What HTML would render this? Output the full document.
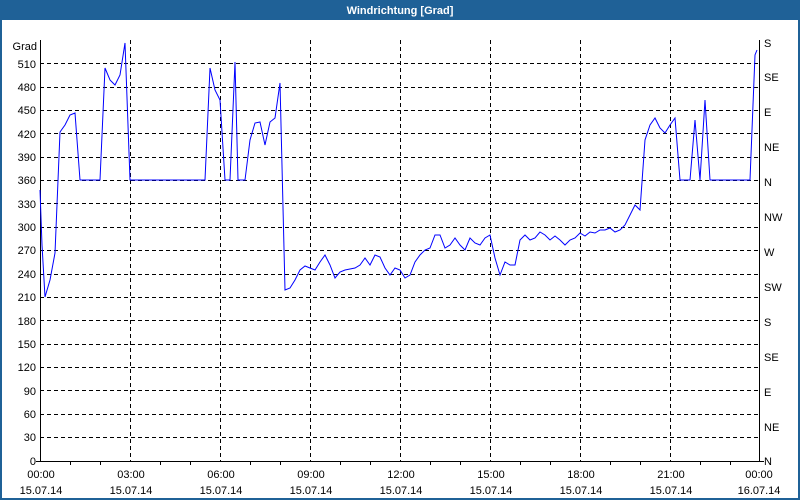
<!DOCTYPE html>
<html><head><meta charset="utf-8"><style>
html,body{margin:0;padding:0;background:#fff;}
body{width:800px;height:500px;overflow:hidden;position:relative;font-family:"Liberation Sans",sans-serif;}
</style></head><body>
<svg width="800" height="500" xmlns="http://www.w3.org/2000/svg" style="position:absolute;left:0;top:0" font-family="Liberation Sans, sans-serif" font-size="11">
<rect x="0" y="0" width="800" height="500" fill="#1f6197"/>
<rect x="2" y="20" width="796" height="478" fill="#fff"/>
<text x="400" y="14" fill="#fff" font-weight="bold" text-anchor="middle">Windrichtung [Grad]</text>
<g stroke="#000" stroke-width="1" stroke-dasharray="4,3" shape-rendering="crispEdges">
<line x1="40" x2="760" y1="63.5" y2="63.5"/><line x1="40" x2="760" y1="87.5" y2="87.5"/><line x1="40" x2="760" y1="110.5" y2="110.5"/><line x1="40" x2="760" y1="133.5" y2="133.5"/><line x1="40" x2="760" y1="157.5" y2="157.5"/><line x1="40" x2="760" y1="180.5" y2="180.5"/><line x1="40" x2="760" y1="203.5" y2="203.5"/><line x1="40" x2="760" y1="227.5" y2="227.5"/><line x1="40" x2="760" y1="250.5" y2="250.5"/><line x1="40" x2="760" y1="274.5" y2="274.5"/><line x1="40" x2="760" y1="297.5" y2="297.5"/><line x1="40" x2="760" y1="320.5" y2="320.5"/><line x1="40" x2="760" y1="344.5" y2="344.5"/><line x1="40" x2="760" y1="367.5" y2="367.5"/><line x1="40" x2="760" y1="390.5" y2="390.5"/><line x1="40" x2="760" y1="414.5" y2="414.5"/><line x1="40" x2="760" y1="437.5" y2="437.5"/>
<line y1="40" y2="461" x1="130.5" x2="130.5"/><line y1="40" y2="461" x1="220.5" x2="220.5"/><line y1="40" y2="461" x1="310.5" x2="310.5"/><line y1="40" y2="461" x1="400.5" x2="400.5"/><line y1="40" y2="461" x1="490.5" x2="490.5"/><line y1="40" y2="461" x1="580.5" x2="580.5"/><line y1="40" y2="461" x1="670.5" x2="670.5"/>
</g>
<g stroke="#000" stroke-width="1" shape-rendering="crispEdges">
<line x1="40.5" y1="40" x2="40.5" y2="462"/><line x1="759.5" y1="40" x2="759.5" y2="462"/><line x1="36" y1="461.5" x2="764" y2="461.5"/>
<line x1="70.5" x2="70.5" y1="461" y2="465"/><line x1="100.5" x2="100.5" y1="461" y2="465"/><line x1="160.5" x2="160.5" y1="461" y2="465"/><line x1="190.5" x2="190.5" y1="461" y2="465"/><line x1="250.5" x2="250.5" y1="461" y2="465"/><line x1="280.5" x2="280.5" y1="461" y2="465"/><line x1="340.5" x2="340.5" y1="461" y2="465"/><line x1="370.5" x2="370.5" y1="461" y2="465"/><line x1="430.5" x2="430.5" y1="461" y2="465"/><line x1="460.5" x2="460.5" y1="461" y2="465"/><line x1="520.5" x2="520.5" y1="461" y2="465"/><line x1="550.5" x2="550.5" y1="461" y2="465"/><line x1="610.5" x2="610.5" y1="461" y2="465"/><line x1="640.5" x2="640.5" y1="461" y2="465"/><line x1="700.5" x2="700.5" y1="461" y2="465"/><line x1="730.5" x2="730.5" y1="461" y2="465"/>
</g>
<g fill="#000" text-anchor="end">
<text x="37" y="50">Grad</text>
<text x="36" y="68">510</text><text x="36" y="91">480</text><text x="36" y="114">450</text><text x="36" y="138">420</text><text x="36" y="161">390</text><text x="36" y="184">360</text><text x="36" y="208">330</text><text x="36" y="231">300</text><text x="36" y="254">270</text><text x="36" y="278">240</text><text x="36" y="301">210</text><text x="36" y="325">180</text><text x="36" y="348">150</text><text x="36" y="371">120</text><text x="36" y="395">90</text><text x="36" y="418">60</text><text x="36" y="441">30</text><text x="36" y="465">0</text>
</g>
<g fill="#000">
<text x="764" y="47">S</text><text x="764" y="81">SE</text><text x="764" y="116">E</text><text x="764" y="151">NE</text><text x="764" y="186">N</text><text x="764" y="221">NW</text><text x="764" y="256">W</text><text x="764" y="291">SW</text><text x="764" y="326">S</text><text x="764" y="361">SE</text><text x="764" y="396">E</text><text x="764" y="431">NE</text><text x="764" y="465">N</text>
</g>
<g fill="#000" text-anchor="middle">
<text x="41" y="478">00:00</text><text x="41" y="494">15.07.14</text>
<text x="131" y="478">03:00</text><text x="131" y="494">15.07.14</text>
<text x="221" y="478">06:00</text><text x="221" y="494">15.07.14</text>
<text x="311" y="478">09:00</text><text x="311" y="494">15.07.14</text>
<text x="401" y="478">12:00</text><text x="401" y="494">15.07.14</text>
<text x="491" y="478">15:00</text><text x="491" y="494">15.07.14</text>
<text x="581" y="478">18:00</text><text x="581" y="494">15.07.14</text>
<text x="671" y="478">21:00</text><text x="671" y="494">15.07.14</text>
<text x="759" y="478">00:00</text><text x="759" y="494">16.07.14</text>
</g>
<polyline fill="none" stroke="#0000ff" stroke-width="1" points="40,190 42,245 45,297 50,280 55,253 60,132 65,125 70,115 75,113 80,180 100,180 105,68 110,80 115,85 120,75 125,43 130,180 205,180 210,68 215,90 220,100 225,180 230,180 235,62 238,180 245,180 250,140 255,123 260,122 265,145 270,122 275,118 280,83 285,290 290,288 295,280 300,270 305,266 310,268 315,270 320,262 325,255 330,265 335,278 340,272 345,270 355,268 360,265 365,258 370,265 375,255 380,257 385,268 390,275 395,268 400,270 405,278 410,275 415,262 420,255 425,250 430,248 435,235 440,235 445,248 450,245 455,238 460,245 465,250 470,238 475,243 480,245 485,238 490,235 495,258 500,275 505,262 510,265 515,265 520,240 525,235 530,240 535,238 540,232 545,235 550,240 555,236 560,240 565,245 570,240 575,238 580,233 585,236 590,232 595,233 600,230 605,230 610,228 615,232 620,230 625,225 630,215 635,205 640,210 645,140 650,125 655,118 660,128 665,133 670,125 675,118 680,180 690,180 695,120 700,180 705,100 710,180 750,180 755,55 757,50"/>
</svg>
</body></html>
